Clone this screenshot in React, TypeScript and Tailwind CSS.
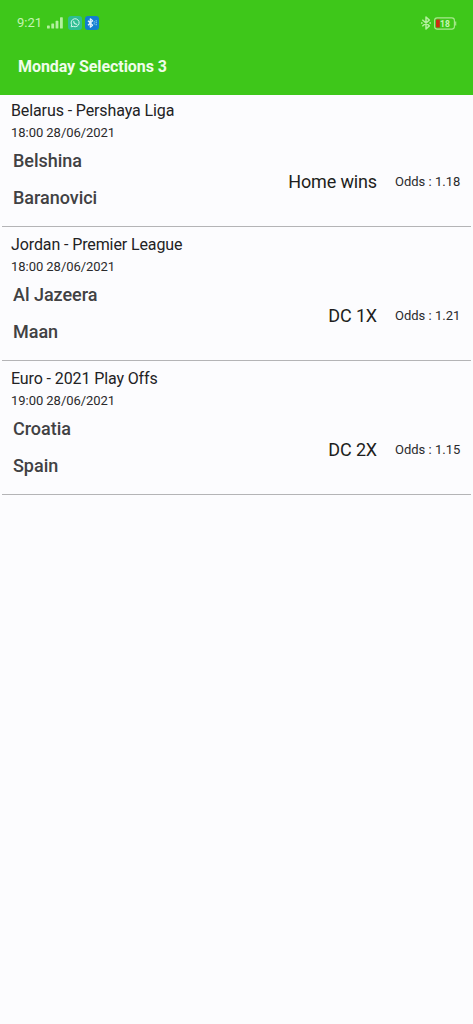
interface Selection {
  readonly league: string;
  readonly kickoff: string;
  readonly home: string;
  readonly away: string;
  readonly tip: string;
  readonly odds: string;
}

const selections: Selection[] = [
  {
    league: "Belarus - Pershaya Liga",
    kickoff: "18:00 28/06/2021",
    home: "Belshina",
    away: "Baranovici",
    tip: "Home wins",
    odds: "1.18",
  },
  {
    league: "Jordan - Premier League",
    kickoff: "18:00 28/06/2021",
    home: "Al Jazeera",
    away: "Maan",
    tip: "DC 1X",
    odds: "1.21",
  },
  {
    league: "Euro - 2021 Play Offs",
    kickoff: "19:00 28/06/2021",
    home: "Croatia",
    away: "Spain",
    tip: "DC 2X",
    odds: "1.15",
  },
];

function SignalIcon() {
  return (
    <svg width="16" height="12" viewBox="0 0 16 12" fill="#b4f09f">
      <rect x="0" y="8.5" width="2.8" height="3" rx="0.6" />
      <rect x="4.3" y="6.5" width="2.8" height="5" rx="0.6" />
      <rect x="8.6" y="3.8" width="2.8" height="7.7" rx="0.6" />
      <rect x="13" y="0.2" width="2.8" height="11.3" rx="0.6" />
    </svg>
  );
}

function WhatsappIcon() {
  return (
    <svg width="14" height="14" viewBox="0 0 14 14">
      <rect width="14" height="14" rx="3" fill="#2fbd92" />
      <path
        d="M3.2 10.8l.5-2a4 4 0 1 1 1.6 1.5z"
        fill="none"
        stroke="#d2f7ec"
        strokeWidth="1"
        strokeLinejoin="round"
      />
      <path
        d="M5.8 5.2c-.2 1.6 1.3 3.2 3 3.1"
        fill="none"
        stroke="#d2f7ec"
        strokeWidth="1.1"
        strokeLinecap="round"
      />
    </svg>
  );
}

function BluetoothAppIcon() {
  return (
    <svg width="14" height="14" viewBox="0 0 14 14" fill="none">
      <rect width="14" height="14" rx="3" fill="#127ed0" />
      <path
        d="M3 4.8l4.6 4.4-2.3 2V2.8l2.3 2L3 9.2"
        stroke="#e2f4ff"
        strokeWidth="1.2"
        strokeLinejoin="round"
      />
      <path
        d="M9.2 5.3v3.4M11.2 4.2v5.6"
        stroke="#8accf5"
        strokeWidth="1.1"
        strokeDasharray="1.2 0.7"
      />
    </svg>
  );
}

function BluetoothIcon() {
  return (
    <svg width="10" height="14" viewBox="0 0 10 14" fill="none">
      <path
        d="M1.3 3.8l7 6.1L5 13V1l3.3 3.1-7 6.1"
        stroke="#b4f09f"
        strokeWidth="1.5"
        strokeLinejoin="round"
      />
      <path d="M0 7h1.6M8.4 7H10" stroke="#b4f09f" strokeWidth="1.4" />
    </svg>
  );
}

function BatteryIcon() {
  return (
    <svg width="23" height="13" viewBox="0 0 23 13">
      <rect
        x="0.6"
        y="0.9"
        width="19.8"
        height="11.2"
        rx="2.6"
        fill="none"
        stroke="#a8e98f"
        strokeWidth="1.1"
      />
      <path d="M21.7 4.5v4" stroke="#a8e98f" strokeWidth="1.1" />
      <path d="M3.2 2.4h2.6v8.2H3.2a1.2 1.2 0 0 1-1.2-1.2V3.6a1.2 1.2 0 0 1 1.2-1.2z" fill="#cc2d12" />
      <text
        x="11"
        y="9.6"
        textAnchor="middle"
        fontSize="8.5"
        fontWeight="700"
        fill="#c9f7b8"
      >
        18
      </text>
    </svg>
  );
}

function StatusBar() {
  return (
    <div className="flex items-center justify-between h-[46px] pl-[17px] pr-4">
      <div className="flex items-center">
        <span className="w-[30px] text-[13px] text-[#c4f5b2]">9:21</span>
        <SignalIcon />
        <div className="flex gap-[3px] ml-[5px]">
          <WhatsappIcon />
          <BluetoothAppIcon />
        </div>
      </div>
      <div className="flex items-center gap-[3px]">
        <BluetoothIcon />
        <BatteryIcon />
      </div>
    </div>
  );
}

function SelectionRow({ selection }: { readonly selection: Selection }) {
  return (
    <li className="h-[134px] mx-0.5 pt-2 pl-[9px] pr-[9px] border-b border-[#b4b4b6]">
      <h2 className="text-[16px] leading-5 tracking-[-0.11px] text-[#222224]">
        {selection.league}
      </h2>
      <p className="mt-[3px] text-[13px] leading-[18px] tracking-[-0.04px] text-[#2a2a2c]">
        {selection.kickoff}
      </p>
      <div className="flex items-center justify-between mt-[7px] pl-0.5">
        <div className="flex flex-col gap-[13px] text-[18px] leading-6 font-medium tracking-[-0.03px] text-[#414143]">
          <span>{selection.home}</span>
          <span>{selection.away}</span>
        </div>
        <div className="flex items-center mt-1">
          <span className="text-[18px] leading-6 tracking-[-0.15px] text-[#1e1e20]">
            {selection.tip}
          </span>
          <span className="w-[67px] ml-[18px] text-[13px] leading-6 whitespace-nowrap text-[#2a2a2c]">
            Odds : {selection.odds}
          </span>
        </div>
      </div>
    </li>
  );
}

export default function App() {
  return (
    <div className="min-h-screen bg-[#fcfcfe] font-['Roboto',sans-serif]">
      <header className="h-[95px] bg-[#3ec71a]">
        <StatusBar />
        <h1 className="pl-[18px] pt-[9px] text-[16px] leading-6 font-bold tracking-[-0.07px] text-[#effce9]">
          Monday Selections 3
        </h1>
      </header>
      {/* the first row starts slightly under the toolbar */}
      <ul className="-mt-0.5">
        {selections.map((selection) => (
          <SelectionRow key={selection.league} selection={selection} />
        ))}
      </ul>
    </div>
  );
}
